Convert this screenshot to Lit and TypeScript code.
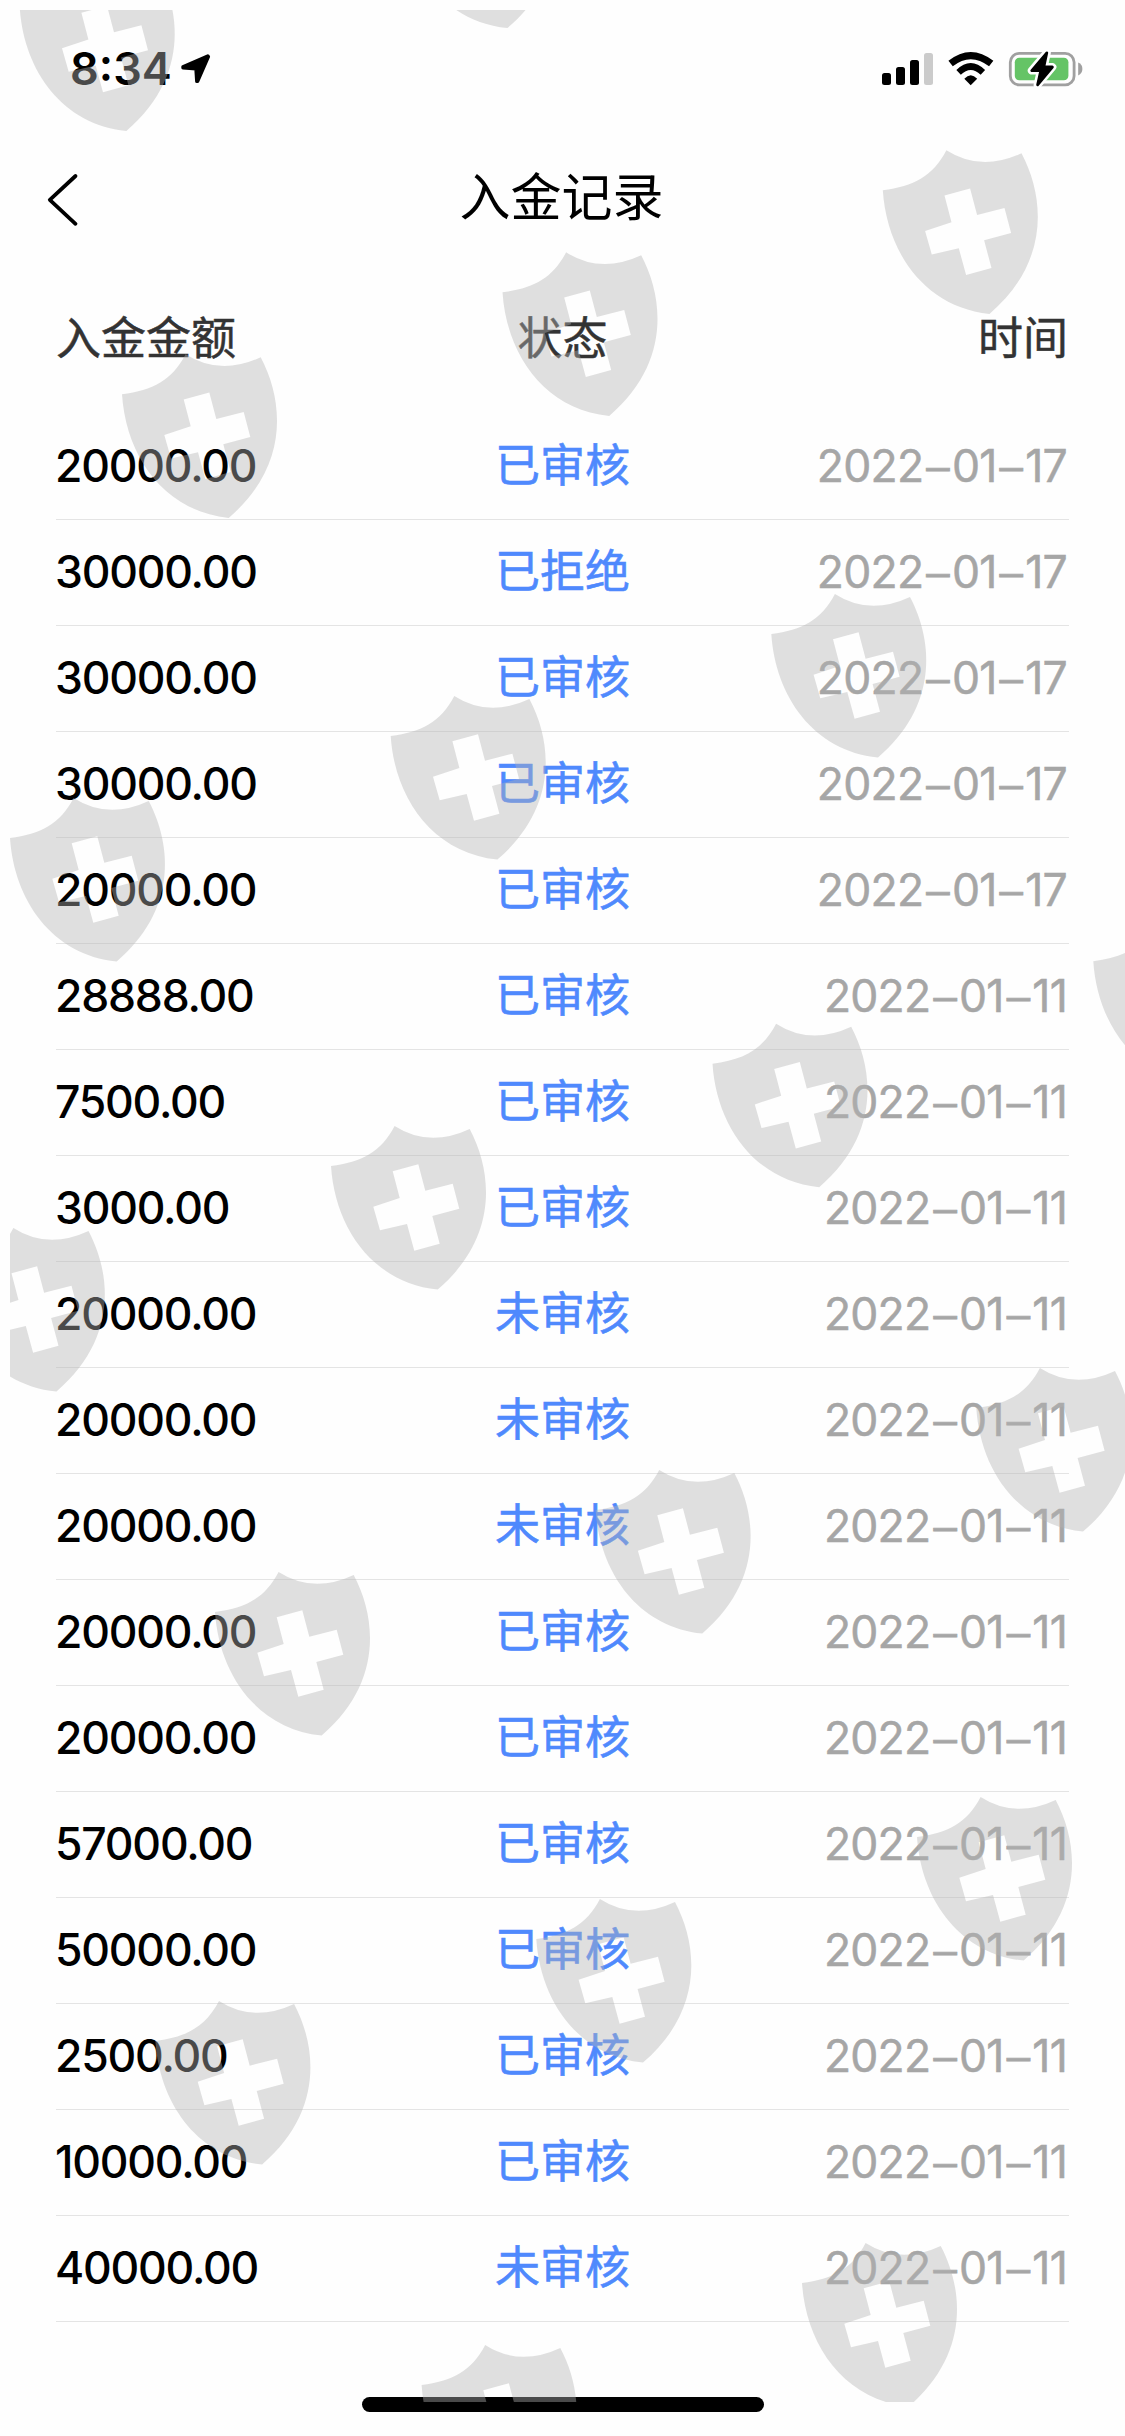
import { LitElement, html, css, svg } from "lit";
import { customElement, property } from "lit/decorators.js";

interface DepositRecord {
  amount: string;
  status: string;
  date: string;
}

const record = (amount: string, status: string, date: string): DepositRecord => ({ amount, status, date });

const RECORDS: DepositRecord[] = [
  record("20000.00", "已审核", "2022–01–17"),
  record("30000.00", "已拒绝", "2022–01–17"),
  record("30000.00", "已审核", "2022–01–17"),
  record("30000.00", "已审核", "2022–01–17"),
  record("20000.00", "已审核", "2022–01–17"),
  record("28888.00", "已审核", "2022–01–11"),
  record("7500.00", "已审核", "2022–01–11"),
  record("3000.00", "已审核", "2022–01–11"),
  record("20000.00", "未审核", "2022–01–11"),
  record("20000.00", "未审核", "2022–01–11"),
  record("20000.00", "未审核", "2022–01–11"),
  record("20000.00", "已审核", "2022–01–11"),
  record("20000.00", "已审核", "2022–01–11"),
  record("57000.00", "已审核", "2022–01–11"),
  record("50000.00", "已审核", "2022–01–11"),
  record("2500.00", "已审核", "2022–01–11"),
  record("10000.00", "已审核", "2022–01–11"),
  record("40000.00", "未审核", "2022–01–11"),
];

/* Left shoulder point of every shield in the watermark. */
const SHIELDS: [number, number][] = [
  [19.7, 7.5], [400.7, -95.5],
  [882.8, 190.3], [502.5, 292.3], [122, 394.3],
  [771.3, 634], [390.7, 736], [10, 838],
  [1093.3, 961.3], [712.5, 1063.7], [331, 1166], [-50.2, 1268],
  [976.3, 1408], [595.6, 1510], [215, 1612],
  [917, 1837], [536.3, 1939], [155.4, 2041],
  [802, 2283], [421.6, 2385],
];

const SHIELD_PATH =
  "M0,0 C31,-4 50,-14 63.6,-40 Q98,-18 138.7,-37 C163,9 166,73 106.7,123.6 C42,117 4,62 0,0 Z " +
  "M61.7,5.3 L87.3,-1.7 94.3,24.7 121.7,17.7 128.3,42.7 101.3,50 108.7,77.7 83.3,84.7 76,58 49,64.3 42.3,40.7 68.7,32 Z";

@customElement("status-bar")
class StatusBar extends LitElement {
  static styles = css`
    :host { display: flex; justify-content: space-between; align-items: center; height: 138px; padding: 0 42px 0 70px; box-sizing: border-box; }
    .left { display: flex; align-items: center; }
    .time { font: 600 45px/56px Inter, "Liberation Sans", sans-serif; letter-spacing: 0; width: 110px; white-space: nowrap; color: #000; }
    svg { display: block; }
  `;
  render() {
    return html`
      <div class="left">
        <span class="time">8:34</span>
        <svg width="31" height="32" viewBox="180 53 31 32">
          <path d="M207.8,56 L183,66.8 183,67.8 196,68.8 196.8,81.4 197.6,81.4 208.4,56.6 Z" fill="#000" stroke="#000" stroke-width="3.4" stroke-linejoin="round"/>
        </svg>
      </div>
      <svg width="203" height="38" viewBox="880 50 203 38">
        <rect x="882" y="73" width="9" height="12" rx="2.5"/>
        <rect x="896" y="67" width="9" height="18" rx="2.5"/>
        <rect x="910" y="60" width="9" height="25" rx="2.5"/>
        <rect x="924" y="53" width="9" height="32" rx="2.5" fill="#cbcbcb"/>
        <path d="M950.6,63.6 Q970.7,47.6 991.2,63.6" fill="none" stroke="#000" stroke-width="7"/>
        <path d="M958.6,72.4 Q970.7,60.6 982.9,72.4" fill="none" stroke="#000" stroke-width="6.4"/>
        <path d="M964.3,78.8 Q970.7,71.8 977.2,78.8 L970.7,85.2 Z"/>
        <rect x="1010.3" y="53.3" width="63.8" height="31.6" rx="9" fill="none" stroke="#a0a0a0" stroke-width="2.8"/>
        <path d="M1078.2,62.6 Q1082.4,64.5 1082.4,69 T1078.2,75.4 Z" fill="#a0a0a0"/>
        <rect x="1014.8" y="57.8" width="53.6" height="22.4" rx="4.5" fill="#65c466"/>
        <path d="M1046.8,52.8 L1031.8,70.6 1040.8,70.6 1037.6,84.8 1052.4,67 1043.8,67 Z" fill="#000" stroke="#fff" stroke-width="8" stroke-linejoin="round"/>
        <path d="M1046.8,52.8 L1031.8,70.6 1040.8,70.6 1037.6,84.8 1052.4,67 1043.8,67 Z" fill="#000" stroke="#000" stroke-width="2.8" stroke-linejoin="round"/>
      </svg>`;
  }
}

@customElement("record-row")
class RecordRow extends LitElement {
  @property({ attribute: false }) item!: DepositRecord;
  static styles = css`
    :host {
      display: grid; grid-template-columns: 1fr 200px 1fr; align-items: center;
      height: 106px; padding-bottom: 2px; box-sizing: border-box; border-bottom: 1px solid #e4e4e4;
      font: 400 44.5px/60px Inter, "Noto Sans CJK SC", sans-serif; white-space: nowrap;
    }
    .amount { font-weight: 500; color: #000; letter-spacing: -1.2px; margin-left: -1px; }
    .status { color: #4f89fd; font-size: 45px; font-family: "Noto Sans CJK SC", sans-serif; text-align: center; margin-bottom: 5px; -webkit-text-stroke: 0.6px #4f89fd; }
    .date { display: flex; justify-content: flex-end; color: #a6a6a6; letter-spacing: -0.75px; padding-right: 2px; -webkit-text-stroke: 0.5px #a6a6a6; }
    .dash { font-family: "Liberation Sans", sans-serif; font-size: 42px; margin: 0 3px; -webkit-text-stroke: 0.8px #a6a6a6; }
  `;
  render() {
    const [year, month, day] = this.item.date.split("–");
    return html`
      <span class="amount">${this.item.amount}</span>
      <span class="status">${this.item.status}</span>
      <span class="date">${year}<span class="dash">–</span>${month}<span class="dash">–</span>${day}</span>`;
  }
}

@customElement("app-root")
class AppRoot extends LitElement {
  static styles = css`
    :host { display: block; position: relative; width: 1125px; height: 2436px; overflow: hidden; background: #fefefe; font-family: "Noto Sans CJK SC", sans-serif; }
    .page { display: flex; flex-direction: column; height: 100%; }
    .nav { display: grid; grid-template-columns: 80px 1fr 80px; align-items: center; height: 124px; padding: 0 46px; box-sizing: border-box; }
    .back { display: block; }
    .title { margin: 0 2px 12px 0; font-size: 51px; font-weight: 400; line-height: 70px; text-align: center; color: #000; }
    .content { padding: 0 56px; }
    .heads { display: grid; grid-template-columns: 1fr 200px 1fr; align-items: center; height: 152px; padding-bottom: 4px; box-sizing: border-box; font-size: 45px; line-height: 60px; color: #333; -webkit-text-stroke: 0.5px #333; }
    .head-mid { text-align: center; }
    .head-end { text-align: right; padding-right: 1px; }
    .footer { flex: 1; display: flex; justify-content: center; align-items: flex-end; padding-bottom: 24px; }
    .home { width: 402px; height: 15px; border-radius: 8px; background: #000; }
    .watermark { position: absolute; inset: 0; pointer-events: none; }
  `;
  render() {
    return html`
      <div class="page">
        <status-bar></status-bar>
        <header class="nav">
          <svg class="back" width="34" height="54" viewBox="46 173 34 54">
            <path d="M75.5,176 L49.8,199.8 75.5,223.8" fill="none" stroke="#000" stroke-width="3.8" stroke-linecap="round" stroke-linejoin="round"/>
          </svg>
          <h1 class="title">入金记录</h1>
        </header>
        <main class="content">
          <div class="heads">
            <span>入金金额</span>
            <span class="head-mid">状态</span>
            <span class="head-end">时间</span>
          </div>
          ${RECORDS.map((item) => html`<record-row .item=${item}></record-row>`)}
        </main>
        <div class="footer"><div class="home"></div></div>
      </div>
      <svg class="watermark" width="1125" height="2436" viewBox="0 0 1125 2436">
        <defs><clipPath id="area"><rect x="10" y="10" width="1115" height="2392"/></clipPath></defs>
        <g clip-path="url(#area)" fill="#b4b4b4" fill-opacity="0.41" fill-rule="evenodd">
          ${SHIELDS.map(([x, y]) => svg`<path transform="translate(${x} ${y})" d=${SHIELD_PATH}/>`)}
        </g>
      </svg>`;
  }
}
